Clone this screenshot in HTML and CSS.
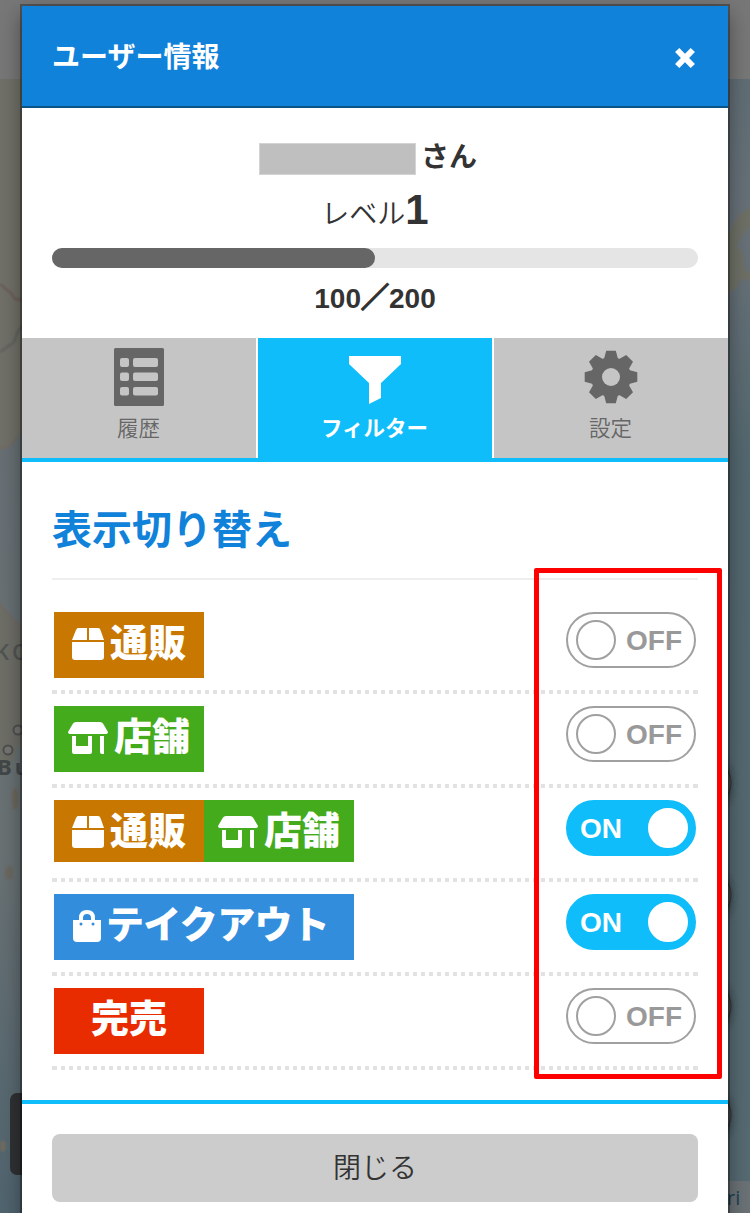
FILE: index.html
```html
<!DOCTYPE html>
<html lang="ja">
<head>
<meta charset="utf-8">
<title>ユーザー情報</title>
<link rel="stylesheet" href="styles.css">
</head>
<body>
<svg class="map" viewBox="0 0 750 1213" aria-hidden="true">
  <defs>
    <filter id="soft"><feGaussianBlur stdDeviation="1"/></filter>
    <filter id="softer" x="-100%" y="-30%" width="300%" height="160%"><feGaussianBlur stdDeviation="4"/></filter>
    <linearGradient id="sea" x1="0" y1="0" x2="0" y2="1">
      <stop offset="0" stop-color="#5c6b72"/><stop offset=".2" stop-color="#687178"/>
      <stop offset=".38" stop-color="#53676e"/><stop offset="1" stop-color="#566a72"/>
    </linearGradient>
    <linearGradient id="seaLeft" x1="0" y1="0" x2="0" y2="1">
      <stop offset="0" stop-color="#646d75"/><stop offset=".7" stop-color="#697173"/><stop offset="1" stop-color="#50646f"/>
    </linearGradient>
  </defs>
  <rect width="400" height="1213" fill="url(#seaLeft)"/>
  <rect x="400" width="350" height="1213" fill="url(#sea)"/>
  <g filter="url(#soft)">
    <path d="M-5 60H40V420L18 436Q12 448-5 449Z" fill="#6f7067"/>
    <path d="M-5 598Q14 622 40 645V730L18 746 10 770H-5Z" fill="#6d6e66"/>
    <path d="M-5 598Q14 622 30 636M18 436Q12 448-3 449" fill="none" stroke="#75695f" stroke-width="1.5"/>
    <path d="M0 284 11 293 15 299 22 300" fill="none" stroke="#6c5753" stroke-width="2"/>
    <path d="M0 352 14 342 18 331 24 325" fill="none" stroke="#555955" stroke-width="1.5"/>
    <path d="M752 207Q736 214 732 229L727 235V293L736 288 742 278 753 281V276L744 269Q744 251 736 246 742 232 753 224Z" fill="#6d6f65" stroke="#727064"/>
    <ellipse cx="15" cy="799" rx="3" ry="11" fill="#6d665c"/>
    <ellipse cx="9" cy="873" rx="4" ry="7" fill="#6b675f"/>
    <ellipse cx="3" cy="1146" rx="3" ry="6" fill="#706b60"/>
  </g>
  <rect width="750" height="79" fill="#777"/>
  <circle cx="8" cy="750" r="4.5" fill="#747570" stroke="#4e5050" stroke-width="2"/>
  <circle cx="18" cy="730" r="4.5" fill="#747570" stroke="#4e5050" stroke-width="2"/>
  <text class="map-label map-label-faint" x="-5" y="660">KO</text>
  <text class="map-label" x="-3" y="775">Bu</text>
  <g fill="#20292d" filter="url(#softer)">
    <ellipse cx="720" cy="784" rx="10" ry="20"/><ellipse cx="720" cy="896" rx="10" ry="20"/>
    <ellipse cx="720" cy="1007" rx="10" ry="20"/><ellipse cx="720" cy="1116" rx="10" ry="20"/>
  </g>
  <g fill="#555" stroke="#303436">
    <circle cx="708" cy="783" r="23"/><circle cx="708" cy="895" r="23"/>
    <circle cx="708" cy="1006" r="23"/><circle cx="708" cy="1115" r="23"/>
  </g>
  <rect x="10" y="1093" width="60" height="82" rx="7" fill="#2f3133"/>
  <rect x="600" y="1181" width="150" height="32" fill="#6b7275"/>
  <text class="map-credit" x="727" y="1205">ri</text>
</svg>

<div class="modal">
  <header class="modal-header">
    <h1 class="modal-title">ユーザー情報</h1>
    <svg class="close" viewBox="0 0 22 24"><path d="M3.2 4 18.8 20M18.8 4 3.2 20" stroke="#fff" stroke-width="6"/></svg>
  </header>
  <section class="profile">
    <div class="user"><span class="user-name"></span><span>さん</span></div>
    <div class="level">レベル<b class="level-number">1</b></div>
    <div class="progress"><div class="progress-value"></div></div>
    <div class="points">100<span class="slash">／</span>200</div>
  </section>
  <nav class="tabs">
    <div class="tab">
      <svg class="tab-icon" viewBox="0 0 60 60"><rect x="5" y="1" width="50" height="58" rx="1.5" fill="#666"/><g fill="#c5c5c5"><rect x="11" y="11" width="9" height="9" rx="2"/><rect x="24" y="11" width="25" height="9" rx="2"/><rect x="11" y="25.5" width="9" height="8.5" rx="2"/><rect x="24" y="25.5" width="25" height="8.5" rx="2"/><rect x="11" y="40" width="9" height="8.5" rx="2"/><rect x="24" y="40" width="25" height="8.5" rx="2"/></g></svg>
      <span>履歴</span>
    </div>
    <div class="tab tab-active">
      <svg class="tab-icon" viewBox="0 0 60 60"><path d="M4 9H56V17L36 36V51L24 57V36L4 17Z" fill="#fff"/></svg>
      <span>フィルター</span>
    </div>
    <div class="tab">
      <svg class="tab-icon" viewBox="-30 -30 60 60"><g fill="#666"><circle r="20"/><g id="teeth"><path id="tooth" d="M-7-18-4.8-26.3H4.8L7-18Z"/><use href="#tooth" transform="rotate(45)"/><use href="#tooth" transform="rotate(90)"/><use href="#tooth" transform="rotate(135)"/></g><use href="#teeth" transform="rotate(180)"/></g><circle r="9" fill="#c5c5c5"/></svg>
      <span>設定</span>
    </div>
  </nav>
  <main class="filters">
    <h2 class="filters-title">表示切り替え</h2>
    <div class="filter-row">
      <div class="badge badge-mail"><svg class="icon-box" viewBox="0 0 32 32"><path id="box" d="M6 0H15V12H0L4 2Q5 0 6 0ZM17 0H26Q28 0 28.5 2L32 12H17ZM0 14H32V29Q32 32 29 32H3Q0 32 0 29Z" fill="#fff"/></svg><span>通販</span></div>
      <div class="toggle"><i class="knob"></i>OFF</div>
    </div>
    <div class="filter-row">
      <div class="badge badge-store"><svg class="icon-store" viewBox="0 0 40 32"><path id="store" d="M8 0H32Q34 0 35 1.5L40 10Q40 12 38 12H2Q0 12 0 10L5 1.5Q6 0 8 0ZM4 14H8V24H20V14H24V30Q24 32 22 32H6Q4 32 4 30ZM32 14H36V32H34Q32 32 32 30Z" fill="#fff"/></svg><span>店舗</span></div>
      <div class="toggle"><i class="knob"></i>OFF</div>
    </div>
    <div class="filter-row">
      <div class="badge-pair">
        <div class="badge badge-mail badge-short"><svg class="icon-box" viewBox="0 0 32 32"><use href="#box"/></svg><span>通販</span></div>
        <div class="badge badge-store badge-short"><svg class="icon-store" viewBox="0 0 40 32"><use href="#store"/></svg><span>店舗</span></div>
      </div>
      <div class="toggle toggle-on">ON<i class="knob"></i></div>
    </div>
    <div class="filter-row">
      <div class="badge badge-takeout"><svg class="icon-bag" viewBox="0 0 28 32"><path d="M0 10H28V28Q28 32 24 32H4Q0 32 0 28Z" fill="#fff"/><path d="M8 12V8Q8 2 14 2T20 8V12" fill="none" stroke="#fff" stroke-width="4"/><circle cx="8" cy="14" r="1.5" fill="#328edd"/><circle cx="20" cy="14" r="1.5" fill="#328edd"/></svg><span>テイクアウト</span></div>
      <div class="toggle toggle-on">ON<i class="knob"></i></div>
    </div>
    <div class="filter-row">
      <div class="badge badge-soldout"><span>完売</span></div>
      <div class="toggle"><i class="knob"></i>OFF</div>
    </div>
  </main>
  <footer class="modal-footer"><button class="close-button">閉じる</button></footer>
</div>
<div class="highlight"></div>
</body>
</html>
```

FILE: styles.css
```css
* { box-sizing: border-box; }
body {
  margin: 0;
  height: 1213px;
  overflow: hidden;
  position: relative;
  padding: 6px 22px 0;
  color: #333;
  font-family: "Liberation Sans", "Noto Sans CJK JP", sans-serif;
  font-size: 28px;
}
.map { position: absolute; left: 0; top: 0; width: 750px; height: 1213px; }
.map-label { font: bold 22px "Open Sans", sans-serif; letter-spacing: 3px; fill: #424748; }
.map-label-faint { font-weight: 600; font-size: 22px; fill: #505452; }
.map-credit { font: 20px "Open Sans", sans-serif; fill: #1c4355; }
.modal {
  position: relative;
  height: 1230px;
  background: #fff;
  box-shadow: 0 0 0 2px rgba(0, 0, 0, .3), 0 8px 20px rgba(0, 0, 0, .42);
}
.modal-header {
  display: flex;
  align-items: center;
  justify-content: space-between;
  height: 102px;
  padding: 0 32px 2px 30px;
  background: #1182d9;
  border-bottom: 2px solid #0b5485;
}
.modal-title { margin: 5px 0 0; font-size: 28px; line-height: 40px; color: #fff; }
.close { width: 22px; height: 24px; margin-top: 6px; }
.profile { height: 230px; padding: 30px 30px 0; text-align: center; }
.user {
  display: flex;
  align-items: center;
  gap: 5px;
  height: 40px;
  padding-left: 207px;
  font-weight: bold;
  line-height: 40px;
}
.user-name { width: 157px; height: 32px; margin-top: 2px; background: #bfbfbf; border: 1px solid #d4d4d4; }
.level { height: 70px; line-height: 73px; font-weight: 350; }
.level-number { font-size: 42px; font-weight: 700; line-height: 1; }
.progress { height: 20px; border-radius: 10px; background: #e5e5e5; }
.progress-value { width: 50%; height: 20px; border-radius: 10px; background: #666; }
.points { line-height: 62px; font-weight: bold; }
.slash { -webkit-text-stroke: 1.6px #333; }
.tabs {
  display: grid;
  grid-template-columns: repeat(3, 1fr);
  gap: 2px;
  height: 124px;
  border-bottom: 4px solid #0fbdfa;
}
.tab {
  display: flex;
  flex-direction: column;
  align-items: center;
  padding-top: 9px;
  background: #c5c5c5;
  color: #666;
  font-size: 21.5px;
  font-weight: 350;
  line-height: 44px;
}
.tab-active { background: #0fbdfa; color: #fff; font-weight: bold; }
.tab span { margin-right: 1px; }
.tab-icon { width: 60px; height: 60px; flex: none; }
.filters { height: 642px; padding: 30px 30px 0; border-bottom: 4px solid #0fbdfa; }
.filters-title {
  height: 88px;
  margin: 0;
  font-size: 40px;
  line-height: 76px;
  color: #1182d9;
  border-bottom: 2px solid #eee;
}
.filter-row {
  display: flex;
  align-items: flex-start;
  justify-content: space-between;
  height: 94px;
  padding: 12px 2px 0;
  background:
    linear-gradient(#e2e2e2, #e2e2e2) 0 100% / 1px 4px no-repeat,
    linear-gradient(#e2e2e2, #e2e2e2) 100% 100% / 1px 4px no-repeat,
    repeating-linear-gradient(90deg, transparent 0 1px, #e2e2e2 1px 5px, transparent 5px 8px) 0 100% / 100% 4px no-repeat;
}
.filters-title + .filter-row { height: 114px; padding-top: 32px; }
.badge {
  display: flex;
  justify-content: center;
  width: 150px;
  height: 66px;
  color: #fff;
  font-size: 38px;
  font-weight: 900;
  line-height: 62px;
}
.badge svg { flex: none; margin-top: 16px; }
.badge-pair { display: flex; }
.badge-short { height: 62px; }
.badge-mail { background: #c87800; }
.badge-store { background: #44ab1c; }
.badge-takeout { width: 300px; justify-content: flex-start; padding-left: 19px; letter-spacing: -.7px; background: #328edd; }
.badge-soldout { background: #e92c00; }
.icon-box { width: 32px; height: 32px; margin-right: 6px; }
.icon-store { width: 40px; height: 32px; margin-right: 6px; }
.icon-bag { width: 28px; height: 32px; margin-right: 5px; }
.toggle {
  display: flex;
  align-items: center;
  justify-content: space-between;
  width: 130px;
  height: 56px;
  padding: 1px 12px 0 8px;
  border: 2px solid #a0a0a0;
  border-radius: 28px;
  color: #999;
  font-weight: bold;
  line-height: 52px;
}
.knob { width: 40px; height: 40px; margin-top: -1px; border: 2px solid #a0a0a0; border-radius: 50%; }
.toggle-on { padding: 1px 6px 0 12px; color: #fff; background: #0fbdfa; border-color: #0fbdfa; }
.toggle-on .knob { background: #fff; border-color: #fff; }
.modal-footer { padding: 30px; }
.close-button {
  display: block;
  width: 100%;
  height: 68px;
  padding: 0 0 4px;
  border: 0;
  border-radius: 8px;
  background: #ccc;
  color: #333;
  font: 350 28px/64px "Noto Sans CJK JP", sans-serif;
}
.highlight {
  position: absolute;
  left: 534px;
  top: 568px;
  width: 188px;
  height: 511px;
  border: 5px solid #f00;
  border-radius: 2px;
}
```
